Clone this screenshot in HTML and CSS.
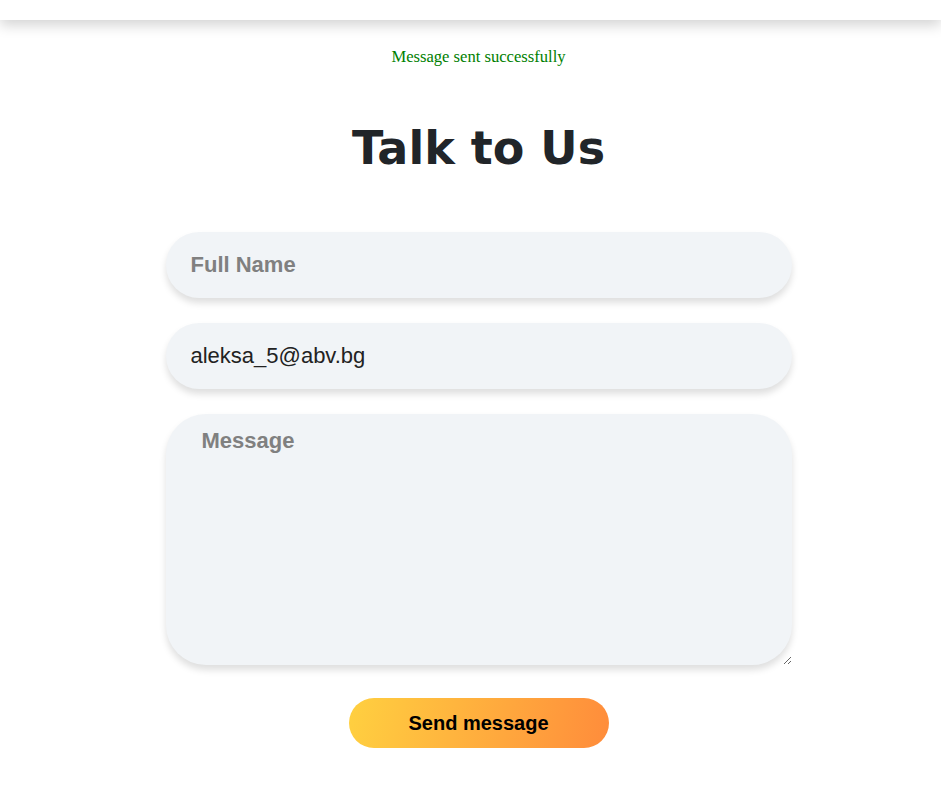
FILE: index.html
```html
<!DOCTYPE html>
<html lang="en">
<head>
<meta charset="utf-8">
<title>Talk to Us</title>
<link rel="stylesheet" href="styles.css">
</head>
<body>
<header class="topbar"></header>
<main class="page">
  <p class="status">Message sent successfully</p>
  <h1 class="title">Talk to Us</h1>
  <form class="contact">
    <input class="field" type="text" placeholder="Full Name">
    <input class="field" type="email" value="aleksa_5@abv.bg" placeholder="Email">
    <textarea class="field area" placeholder="Message"></textarea>
    <button class="send" type="button">Send message</button>
  </form>
</main>
</body>
</html>
```
FILE: styles.css
```css
html, body {
  margin: 0;
  padding: 0;
  background: #ffffff;
}

.topbar {
  height: 20px;
  background: #ffffff;
  box-shadow: 0 5px 14px rgba(0, 0, 0, 0.18);
}

.page {
  padding-left: 16px;
  display: flex;
  flex-direction: column;
  align-items: center;
}

.status {
  margin: 28px 0 0;
  font-family: "Liberation Serif", "Times New Roman", serif;
  font-size: 16.6px;
  line-height: 18px;
  color: #008000;
}

.title {
  margin: 55px 0 0;
  font-family: "DejaVu Sans", sans-serif;
  font-weight: bold;
  font-size: 46px;
  line-height: 54px;
  color: #212529;
}

.contact {
  margin-top: 57px;
  width: 626px;
  display: flex;
  flex-direction: column;
  align-items: center;
  gap: 25px;
}

.field {
  box-sizing: border-box;
  width: 100%;
  height: 66px;
  border: none;
  outline: none;
  border-radius: 33px;
  background: #f1f4f7;
  box-shadow: 0 5px 7px rgba(0, 0, 0, 0.13);
  padding: 0 25px;
  font-family: "Liberation Sans", Arial, sans-serif;
  font-size: 22px;
  color: #222222;
}

.field::placeholder {
  color: #808080;
  font-weight: bold;
  opacity: 1;
}

.area {
  height: 251px;
  border-radius: 40px;
  padding: 14px 36px;
  display: block;
}

.send {
  margin-top: 8px;
  width: 260px;
  height: 50px;
  border: none;
  border-radius: 25px;
  background: linear-gradient(100deg, #ffd040 0%, #ff8c3b 100%);
  font-family: "Liberation Sans", Arial, sans-serif;
  font-weight: bold;
  font-size: 20px;
  color: #000000;
  cursor: pointer;
}
```
